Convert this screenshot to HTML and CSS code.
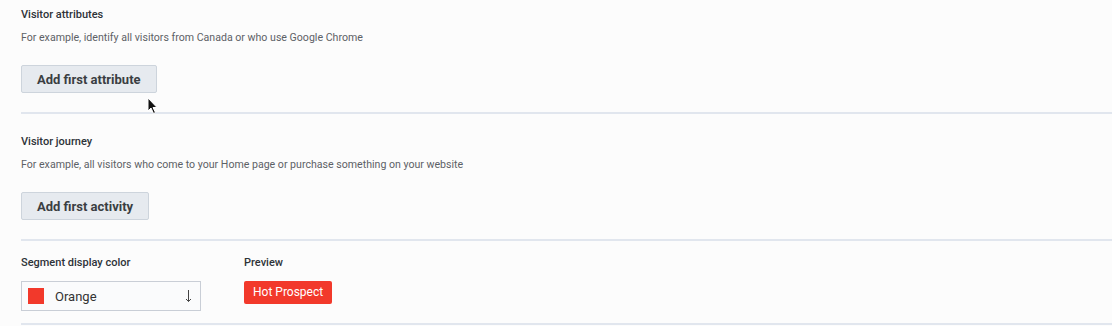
FILE: index.html
```html
<!DOCTYPE html>
<html lang="en">
<head>
  <meta charset="UTF-8">
  <meta name="viewport" content="width=device-width, initial-scale=1.0">
  <link rel="stylesheet" href="styles.css">
</head>
<body>
  <div class="wrapper">

    <!-- attributes -->
    <div class="section first">
      <h3 class="title">Visitor attributes</h3>
      <p class="desc">For example, identify all visitors from Canada or who use Google Chrome</p>
      <div class="btn-row">
        <button class="btn">Add first attribute</button>
        <svg class="cursor" width="12" height="18" viewBox="0 0 12 18">
          <path d="M1 1 L1 14 L4 11 L6.5 16.5 L8.5 15.5 L6 10.5 L10 10.5 Z" fill="#111" stroke="#fff" stroke-width="1"/>
        </svg>
      </div>
    </div>

    <!-- journey -->
    <div class="section">
      <h3 class="title">Visitor journey</h3>
      <p class="desc">For example, all visitors who come to your Home page or purchase something on your website</p>
      <button class="btn">Add first activity</button>
    </div>

    <!-- colour -->
    <div class="section colors">
      <div class="field">
        <h3 class="title">Segment display color</h3>
        <div class="select">
          <span class="swatch"></span>
          <span class="select-text">Orange</span>
          <svg class="arrow" width="7" height="14" viewBox="0 0 7 14">
            <path d="M3.5 1 V12.5 M1 10 L3.5 12.5 L6 10" fill="none" stroke="#444" stroke-width="1"/>
          </svg>
        </div>
      </div>
      <div class="field">
        <h3 class="title">Preview</h3>
        <span class="badge">Hot Prospect</span>
      </div>
    </div>

  </div>
</body>
</html>
```

FILE: styles.css
```css
html, body {
  margin: 0;
  padding: 0;
}

body {
  background-color: #fcfcfc;
  font-family: Roboto, "Liberation Sans", sans-serif;
  color: #333;
}

.wrapper {
  padding-left: 21px;
}

.section {
  padding: 21px 0 19px 0;
  border-bottom: 2px solid #e1e6ee;
}

.section.first {
  padding-top: 8px;
}

.title {
  margin: 0;
  font-size: 11px;
  line-height: 14px;
  font-weight: 500;
  color: #2e3338;
}

.desc {
  margin: 9px 0 20px 0;
  font-size: 10.6px;
  line-height: 14px;
  color: #5c6166;
}

.btn-row {
  position: relative;
}

.btn {
  display: block;
  height: 28px;
  padding: 0 15px;
  background-color: #e6eaef;
  border: 1px solid #cdd4dc;
  border-radius: 2px;
  font-family: Roboto, "Liberation Sans", sans-serif;
  font-size: 13px;
  font-weight: 700;
  color: #3a3e42;
}

.cursor {
  position: absolute;
  left: 126px;
  top: 32px;
}

.colors {
  display: flex;
  gap: 43px;
  padding-top: 15px;
  padding-bottom: 12px;
}

.colors .title {
  margin-bottom: 11px;
}

.select {
  display: flex;
  align-items: center;
  width: 178px;
  height: 28px;
  background-color: #fafbfc;
  border: 1px solid #c9ced6;
  font-size: 13px;
  color: #333;
}

.swatch {
  width: 16px;
  height: 16px;
  margin-left: 6px;
  background-color: #f2392b;
}

.select-text {
  flex: 1;
  margin-left: 11px;
}

.arrow {
  margin-right: 8px;
}

.badge {
  display: inline-block;
  height: 23px;
  line-height: 23px;
  padding: 0 9px;
  background-color: #f2392b;
  border-radius: 2px;
  font-size: 12px;
  color: #fff;
}
```
